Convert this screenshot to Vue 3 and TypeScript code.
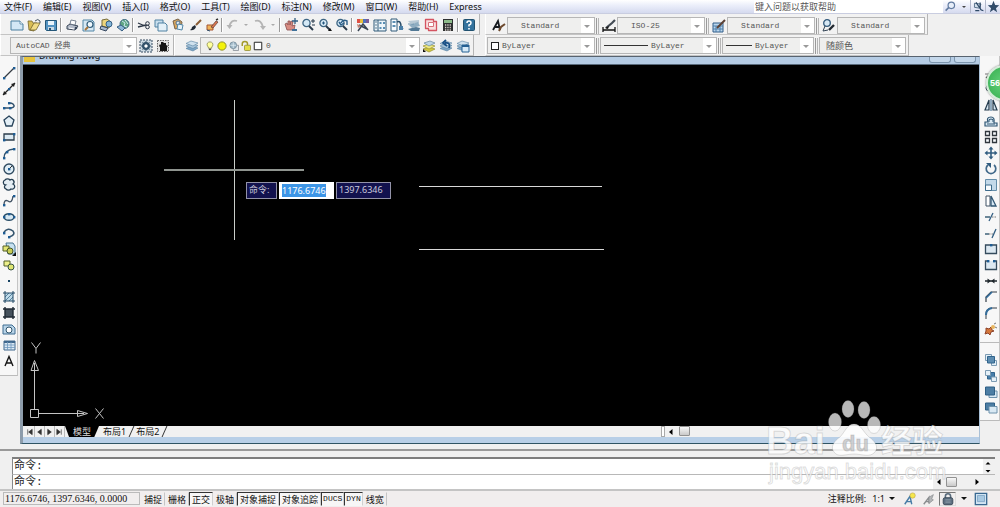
<script setup lang="ts">
import { ref } from 'vue'

interface Combo {
  label: string
  value: string
  width: number
  icon?: string
  lead?: 'swatch' | 'line' | 'short'
  pad?: number
}

const menus: string[] = ['文件(F)', '编辑(E)', '视图(V)', '插入(I)', '格式(O)', '工具(T)', '绘图(D)', '标注(N)', '修改(M)', '窗口(W)', '帮助(H)', 'Express']

const layersShape = '<path d="M2 10.500l5-2.500 7 2-5 3z" fill="#7aa3c4" stroke="#55809f" stroke-width=".6"/><path d="M2 8l5-2.500 7 2-5 3z" fill="#a9c7de" stroke="#55809f" stroke-width=".6"/><path d="M2 5.500l5-2.500 7 2-5 3z" fill="#cfe1ee" stroke="#55809f" stroke-width=".6"/>'
const lens = '<circle cx="6.500" cy="6" r="3.600" fill="#d5e9f6" stroke="#3d6583" stroke-width="1.300"/><path d="M9 9l4 4" stroke="#2a3b4b" stroke-width="2"/>'
const dots = (points: number[][]): string => points.map(([x, y]) => `<rect x="${x - 1}" y="${y - 1}" width="2.400" height="2.400" fill="#1e5c93"/>`).join('')

const icons: Record<string, string> = {
  new: '<path d="M2 4h9l3 3v6H2z" fill="#d3e7f5" stroke="#4b7f9f"/><path d="M11 4v3h3" fill="#fff" stroke="#4b7f9f" stroke-width=".8"/>',
  open: '<path d="M2 4h4l1 2h4l-3 8-5-1z" fill="#d9bd55" stroke="#74652d" stroke-width=".8"/><path d="M4 13l4-7h6l-4 7z" fill="#f1dc87" stroke="#74652d" stroke-width=".8"/><path d="M9 4q3-3 5 0v2" fill="none" stroke="#465565"/>',
  save: '<path d="M2.500 3.500h11v10h-10l-1-1z" fill="#5494c3" stroke="#245779"/><path d="M5 4h6v4H5z" fill="#e9f3fa"/><path d="M5 10h6v3H5z" fill="#c9d9e5"/><path d="M6 11h2v2H6z" fill="#285173"/>',
  plot: '<path d="M3 9l3-2 8 2-3 4-8-1z" fill="#b4bcc9" stroke="#394657"/><path d="M6 7l1-4 5 1-1 4z" fill="#fff" stroke="#596779" stroke-width=".8"/><path d="M5 11l5 1" stroke="#fff"/><circle cx="12" cy="11" r="1.300" fill="#39475b"/>',
  preview: '<path d="M2 3h9l2 2v9H2z" fill="#d7e8f3" stroke="#5387a7"/><circle cx="9" cy="7.500" r="3" fill="#eff8fd" stroke="#315d7a" stroke-width="1.200"/><path d="M7 10l-3 3" stroke="#a8753c" stroke-width="2"/>',
  publish: '<path d="M4 3l5-1 4 3-2 6-7-2z" fill="#edd57b" stroke="#776c3b"/><circle cx="11" cy="7" r="3" fill="#83b5d8" stroke="#345f83"/><path d="M3 9l7 2-2 3-6-2z" fill="#a8b9ce" stroke="#34465c"/>',
  web: '<circle cx="9.500" cy="7" r="4.500" fill="#62a785" stroke="#3b6580"/><path d="M7 4l3 2-1 3 3 1M10 3l3 4" stroke="#c8e8ee" fill="none"/><path d="M2 10l4-2 4 3-3 3z" fill="#8fb8da" stroke="#385f83"/>',
  cut: '<path d="M2 6l7 3M2 10l8-2" stroke="#2a3544" stroke-width="1.300"/><circle cx="11.500" cy="6.500" r="1.800" fill="none" stroke="#2a3544"/><circle cx="11.500" cy="10" r="1.800" fill="none" stroke="#2a3544"/>',
  copy: '<path d="M2 3h8v7H2z" fill="#c8deed" stroke="#4f81a2"/><path d="M5 6h7l2 2v6H5z" fill="#e3f0f8" stroke="#4f81a2"/>',
  paste: '<path d="M3 4l5-2 4 3-1 6-6 1z" fill="#d8a65d" stroke="#77634a"/><circle cx="8" cy="6" r="2" fill="#dce7ee" stroke="#50708c"/><path d="M8 7l5 1-1 5-5-1z" fill="#e6f3fb" stroke="#5387a7"/>',
  brush: '<path d="M9 8l5-5" stroke="#8a5d35" stroke-width="2"/><path d="M3 13q2-1 2-3l3-2 1 2q-2 4-6 3z" fill="#202934"/>',
  block: '<path d="M3 8h6v5H3z" fill="#efb45b" stroke="#a55430"/><path d="M7 10l5-6 2 1-5 6z" fill="#dc7650" stroke="#5a3b30" stroke-width=".7"/><path d="M12 3l2-1" stroke="#333" stroke-width="1.500"/><path d="M3 13l3 1" stroke="#31526f"/>',
  undo: '<path d="M12 4q-6-2-8 6" fill="none" stroke="#b4b4b4" stroke-width="1.800"/><path d="M1.500 8l3 4 3-4z" fill="#b4b4b4"/>',
  redo: '<path d="M3 4q6-2 8 6" fill="none" stroke="#b4b4b4" stroke-width="1.800"/><path d="M14 9l-3 4-3-4z" fill="#b4b4b4"/>',
  pan: '<path d="M4 13l-2-6 2-1 1 2V4h2v4l1-4 2 1-1 4 3-1-1 5z" fill="#d88c82" stroke="#8b5151" stroke-width=".8"/><path d="M12 1v6M9 4h6" stroke="#315f83" stroke-width="1.300"/><path d="M9 12h5v2H9z" fill="#40729a"/>',
  zoom: lens + '<path d="M13 2v4M11 4h4M12 8h3" stroke="#26394a"/>',
  zoomwin: lens + '<path d="M5 6h3M6.500 4.500v3" stroke="#24577e"/><path d="M11 14h4l-2-3z" fill="#111"/>',
  zoomprev: lens + '<path d="M13 8V4q-4-2-6 2M5 5l2 3 3-2" fill="none" stroke="#2c5e88" stroke-width="1.400"/>',
  props: '<path d="M2 2h3v4H2z" fill="#df5144"/><path d="M5 2h3v4H5z" fill="#e8bf3d"/><path d="M8 2h3v4H8z" fill="#4f72bd"/><path d="M11 2h3v4h-3z" fill="#7b5b98"/><path d="M3 14l5-7 5 6M4 8l8 4" stroke="#384453" stroke-width="1.500" fill="none"/><path d="M2 7l4 2-3 2z" fill="#c18274"/>',
  design: '<path d="M2 3h12v11H2z" fill="#edf5f9" stroke="#315b78"/><path d="M6 3v11" stroke="#315b78"/><path d="M3.500 5h1M3.500 8h1M3.500 11h1" stroke="#315b78" stroke-width="1.500"/><path d="M7.500 5h2v2h-2zM11 5h2v2h-2zM7.500 10h2v2h-2zM11 10h2v2h-2z" fill="#598eb3"/>',
  palette: '<path d="M2 2h6v12H2z" fill="#f8fcff" stroke="#315b78"/><path d="M3.500 4h3v2h-3zM3.500 8h3v2h-3z" fill="#5b8eb3"/><path d="M8 5q4-2 4 5l2 2" fill="none" stroke="#284c68" stroke-width="1.500"/><path d="M10 9h4v4h-4z" fill="#4a7fa8"/>',
  sheet: '<path d="M2 4l11-1v3H4z" fill="#b8c9d5"/><path d="M3 8l9-3 2 4-8 2z" fill="#8fadc1"/><path d="M2 12l8-2 4 1-1 3H5z" fill="#537995"/><path d="M2 7h6" stroke="#6e94af"/>',
  markup: '<path d="M2.500 2.500h8v2h3v9h-8v-2h-3z" fill="#f8dfdf" stroke="#d45461" stroke-width="1.300" stroke-linejoin="round"/><path d="M5.500 5.500h5v4h-5z" fill="#fff" stroke="#d8707a"/>',
  calc: '<rect x="3" y="2" width="10" height="12" fill="#2e3030"/><path d="M4 3h8v3H4z" fill="#8ebc8b"/><path d="M5 8h6M5 10.500h6M5 13h6" stroke="#ded3cf" stroke-width="1.300" stroke-dasharray="1.300 1"/>',
  help: '<rect x="2.500" y="2.500" width="11" height="11" rx="1" fill="#33729d" stroke="#20516f"/><path d="M6 6q0-2 2-2t2 2q0 1.500-2 2v1.500" fill="none" stroke="#fff" stroke-width="1.500"/><path d="M7.200 11h1.600v1.500H7.200z" fill="#fff"/>',
  textstyle: '<path d="M2 12L7 3l2 9M4 9h4" fill="none" stroke="#171b20" stroke-width="1.800"/><path d="M8 13l2-4 4-3" fill="none" stroke="#6d4a2e" stroke-width="2"/>',
  dimstyle: '<path d="M2 9v5M14 9v5M2 12h12" stroke="#111" stroke-width="1.300"/><path d="M5 10l6-5 3-3" stroke="#434b54" stroke-width="2.200"/><path d="M4 10l4-2-1 3z" fill="#111"/>',
  tablestyle: '<path d="M2 5h10v9H2z" fill="#bad6ed" stroke="#315d88"/><path d="M2 8h10M5 8v6M9 8v6M2 11h10" stroke="#4c7fab"/><path d="M6 10l8-8" stroke="#5b4135" stroke-width="2"/>',
  leader: '<circle cx="6" cy="5" r="3.300" fill="#d7e8f4" stroke="#335a7b" stroke-width="1.300"/><path d="M4 8l-2 5 5-1" fill="none" stroke="#334455"/><path d="M8 12l5-5" stroke="#212830" stroke-width="2.400"/>',
  gear: '<path d="M2 2h12v12H2z" fill="#d0dce4" stroke="#344b60" stroke-dasharray="2 1"/><circle cx="8" cy="8" r="3" fill="none" stroke="#34536b" stroke-width="2"/><path d="M8 3v10M3 8h10M4.500 4.500l7 7M11.500 4.500l-7 7" stroke="#34536b"/><circle cx="8" cy="8" r="1.500" fill="#fff"/>',
  home: '<path d="M2.500 2.500h11v11h-11z" fill="#e3e3e3" stroke="#666" stroke-dasharray="1.500 1"/><path d="M4 8l1-2 1 1V4h2l1 1h2v2l2 1-1 1v4H5V9z" fill="#161616"/>',
  layers: layersShape,
  layercur: '<path d="M2 11l6-2 6 2-6 3z" fill="#d3c940" stroke="#96902e" stroke-width=".7"/><path d="M2 8l6-2 6 2-6 3z" fill="#efe982" stroke="#96902e" stroke-width=".7"/><path d="M3 5l6-2 5 2-6 3z" fill="#bfd6e7" stroke="#64859c" stroke-width=".7"/><path d="M2 14h3l-3-3z" fill="#111"/>',
  layerprev: layersShape + '<path d="M11 10q2-6-4-5M8 2L5 5l4 3" fill="none" stroke="#174f85" stroke-width="1.800"/>',
  layerstate: layersShape + '<path d="M7 7h7v7H7z" fill="#d7ebf9" stroke="#246093"/><path d="M7 8h7" stroke="#246093" stroke-width="2"/>',
  line: '<path d="M3 13L13 3" stroke="#343b43" stroke-width="1.300"/>' + dots([[3, 13], [13, 3]]),
  xline: '<path d="M2 14L14 2" stroke="#222" stroke-width="1.300"/><path d="M2 14l1-4 3 3zM14 2l-1 4-3-3z" fill="#222"/>' + dots([[8, 8]]),
  pline: '<path d="M3 11h7q5-1 2-4-1-1-4-1" fill="none" stroke="#31516c" stroke-width="1.500"/>' + dots([[3, 11], [9, 11], [8, 6]]),
  polygon: '<path d="M8 3l5 4-2 6H5L3 7z" fill="#e3eef5" stroke="#28435a" stroke-width="1.300"/>',
  rect: '<path d="M3 5h10v6H3z" fill="#dceaf3" stroke="#2b3c4b" stroke-width="1.300"/>' + dots([[3, 11], [13, 5]]),
  arc: '<path d="M3 13q0-8 10-9" fill="none" stroke="#31536f" stroke-width="1.400"/>' + dots([[3, 13], [6, 7], [13, 4]]),
  circle: '<circle cx="8" cy="8" r="5" fill="#e1eef6" stroke="#304b61" stroke-width="1.400"/><path d="M8 8l3-3" stroke="#333"/>' + dots([[8, 8]]),
  cloud: '<path d="M4 3a3 2.500 0 0 1 5 0 2.500 2.500 0 0 1 3 4 2.600 2.600 0 1 1-2 5 3 2.500 0 0 1-5 0 2.200 2.200 0 0 1-.5-4A2.600 2.600 0 0 1 4 3z" fill="#e5eef4" stroke="#263f53" stroke-width="1.300"/>',
  spline: '<path d="M3 12q0-6 4-4 4 3 5-5" fill="none" stroke="#405163" stroke-width="1.300"/>' + dots([[3, 12], [13, 3]]),
  ellipse: '<ellipse cx="8" cy="8" rx="5" ry="3.300" fill="#d6e7f1" stroke="#284d67" stroke-width="1.500"/>' + dots([[3, 8], [8, 5], [13, 8]]),
  earc: '<path d="M3 7q4-5 9-1 3 4-4 6" fill="none" stroke="#35556e" stroke-width="1.600"/>' + dots([[3, 8], [8, 12]]),
  insert: '<path d="M5 2h7l2 3v8H7z" fill="#c6e0ef" stroke="#477491"/><path d="M2 5h6v5H2z" fill="#e2e575" stroke="#54602b"/><circle cx="9" cy="10" r="3" fill="#c7cd54" stroke="#465426"/><path d="M11 15h4v-4z" fill="#111"/>',
  make: '<path d="M3 4h6v5H3z" fill="#edf08c" stroke="#54602b"/><circle cx="10" cy="10" r="3" fill="#dfe571" stroke="#355143"/>',
  point: '<rect x="7" y="7" width="2" height="2" fill="#174262"/>',
  hatch: '<path d="M4 4h8v8H4z" fill="#bfdbea"/><path d="M4 12l8-8M4 8l4-4M8 12l4-4" stroke="#57839e"/><path d="M4 2v12M12 2v12M2 4h12M2 12h12" stroke="#244b67"/>',
  gradient: '<path d="M4 4h8v8H4z" fill="#45515c"/><path d="M4 2v12M12 2v12M2 4h12M2 12h12" stroke="#202a34" stroke-width="1.400"/>',
  region: '<path d="M2 4h9l3 3v6H2z" fill="#b9d4e8" stroke="#3f6c90"/><circle cx="8" cy="9" r="3" fill="#fff" stroke="#31566e"/>',
  table: '<path d="M3 4h11v9H3z" fill="#dbe9f4" stroke="#40688d"/><path d="M3 5h11" stroke="#40688d" stroke-width="2"/><path d="M3 8h11M3 10.500h11M6.500 5v8M10 5v8" stroke="#6f98be" stroke-width=".8"/>',
  mtext: '<path d="M4 13L8 3.500 12 13M5.500 10h5" fill="none" stroke="#151515" stroke-width="1.400"/>',
  erase: '<path d="M3 13L13 3" stroke="#444" stroke-width="1.300"/><path d="M2 9h4" stroke="#777"/>',
  copyobj: '<circle cx="6" cy="7" r="3" fill="none" stroke="#345"/><circle cx="10" cy="10" r="3" fill="none" stroke="#345"/>',
  mirror: '<path d="M6 3v10H2zM10 3v10h4z" fill="#d7e6f1" stroke="#253b4d" stroke-width="1.200"/><path d="M8 2v12" stroke="#2c5f86"/>',
  offset: '<path d="M2 13h12v-3h-3q1-6-3-6-5 0-3 5H2z" fill="#d8e8f2" stroke="#315774" stroke-width="1.200"/><path d="M4 11h8M6 9q-1-3 2-3t2 3" fill="none" stroke="#315774"/>',
  array: '<path d="M2.500 2.500h4v4h-4zM9.500 2.500h4v4h-4zM2.500 9.500h4v4h-4zM9.500 9.500h4v4h-4z" fill="#f8fbfd" stroke="#30373d" stroke-width="1.300"/>',
  move: '<path d="M8 3v10M3 8h10" stroke="#315c7f" stroke-width="1.600"/><path d="M8 1.500l2.500 3h-5zM8 14.500l2.500-3h-5zM1.500 8l3-2.500v5zM14.500 8l-3-2.500v5z" fill="#315c7f"/>',
  rotate: '<path d="M11 4a4.800 4.800 0 1 1-6 0" fill="none" stroke="#41698a" stroke-width="1.700"/><path d="M3 2h5v5z" fill="#315c7f"/>',
  scale: '<path d="M2.500 2.500h11v11h-11z" fill="#c3d9e9" stroke="#648da9"/><path d="M2.500 8h6v5.500h-6z" fill="#f8fcfe" stroke="#3d6b8b"/>',
  stretch: '<path d="M3 3h4v10H3z" fill="#fff" stroke="#405364"/><path d="M8 3l5 10H8z" fill="#d6e7f3" stroke="#315774" stroke-width="1.300"/>',
  trim: '<path d="M2 8h5" stroke="#30566f" stroke-width="1.400"/><path d="M6 12l4-8" stroke="#315d81" stroke-width="1.300"/><path d="M9 8h5" stroke="#777" stroke-dasharray="1.500 1"/>',
  extend: '<path d="M2 9h4" stroke="#30566f" stroke-width="1.400"/><path d="M6 9h5" stroke="#777" stroke-dasharray="1.500 1"/><path d="M9 13l4-9" stroke="#315d81" stroke-width="1.300"/>',
  breakpt: '<path d="M2.500 4h11v8.500h-11z" fill="#dce8f1" stroke="#354b5d" stroke-width="1.300"/>' + dots([[8, 4]]),
  break: '<path d="M2.500 4h11v8.500h-11z" fill="#dce8f1"/><path d="M5 4H2.500v8.500h11V4H11" fill="none" stroke="#354b5d" stroke-width="1.300"/>' + dots([[5, 4], [11, 4]]),
  join: '<path d="M2 8h12" stroke="#20282e" stroke-width="1.500"/><path d="M8 8L4.500 5.500v5zM8 8l3.500-2.500v5z" fill="#20282e"/>',
  chamfer: '<path d="M3 13V8l5-5h6" fill="none" stroke="#333d46" stroke-width="1.200"/><path d="M3 9l6-6" stroke="#346d9b" stroke-width="1.700"/>',
  fillet: '<path d="M3 14V9q0-6 6-6h5" fill="none" stroke="#333d46"/><path d="M3 10q0-6 6-7" fill="none" stroke="#346d9b" stroke-width="2"/>',
  explode: '<path d="M3 7l3 1 2-2 1 3 2 1-3 1-1 3-2-2-3 1 1-3z" fill="#d5773b" stroke="#8e442b"/><circle cx="10" cy="6" r="2" fill="#e9b65f"/><path d="M11 3l2-1M12 6l2 1" stroke="#777"/>',
  front: '<path d="M2.500 2.500h6v6h-6zM8.500 8.500h5v5h-5z" fill="#e5f0f8" stroke="#7c9bb2"/><path d="M4.500 4.500h7v6.500h-7z" fill="#5d8cb0" stroke="#31648c"/>',
  back: '<path d="M4.500 4.500h7v6.500h-7z" fill="#477eaa" stroke="#31648c"/><path d="M2.500 2.500h5v5h-5zM8.500 9h5v4.500h-5z" fill="#e5f0f8" stroke="#7c9bb2"/>',
  above: '<path d="M6 7h8v6.500H6z" fill="#d9e9f4" stroke="#6e92ac"/><path d="M2.500 3h9v8h-9z" fill="#4d7ea4" stroke="#2f5f85"/>',
  below: '<path d="M2.500 3h9v7h-9z" fill="#4d7ea4" stroke="#2f5f85"/><path d="M6 6.500h8v6.500H6z" fill="#d9e9f4" stroke="#6e92ac"/>',
  bulb: '<path d="M6 11q0-2-1.500-3-1.500-5 3.500-5.500Q13 3 11.500 8 10 9 10 11z" fill="#ffff9b" stroke="#858545"/><path d="M6.500 12.500h3" stroke="#555" stroke-width="2"/>',
  sun: '<circle cx="8" cy="8" r="5.500" fill="#f3f20b" stroke="#8f8d28" stroke-width="1.300"/>',
  freeze: '<path d="M7 7h7v7H7z" fill="#e2e8ec" stroke="#808890"/><circle cx="7" cy="7" r="4.500" fill="#9eb7c7" stroke="#6e8493"/><path d="M7 3v8M3 7h8" stroke="#e1edf4"/>',
  lock: '<path d="M3 8V5q0-3 3.500-3T10 5v2" fill="none" stroke="#a39a2c" stroke-width="2"/><rect x="6" y="7" width="8" height="7" rx="1" fill="#e5df46" stroke="#8e872c"/>',
  box: '<path d="M3 3h10v10H3z" fill="#fff" stroke="#222" stroke-width="1.300"/>',
  search: '<circle cx="9" cy="6.500" r="4" fill="#e7eef9" stroke="#627ba0" stroke-width="1.500"/><path d="M6 9l-4 4" stroke="#627ba0" stroke-width="2"/>',
  comm: '<path d="M3 4l8 1-2 5-6-1z" fill="#d2dfec" stroke="#3f5b78"/><path d="M5 3l6 9M10 3v6q0 4 4 4M4 13h5" fill="none" stroke="#2e4967" stroke-width="1.500"/>',
  star: '<path d="M8 1l2 5 5 .5-4 3.500 1.500 5-4.500-3-4.500 3L5 10 1 6.500 6 6z" fill="#314c6a"/>',
  annot: '<path d="M2 14L8 5l2 9M4 11h5" fill="none" stroke="#477ca6" stroke-width="1.600"/><circle cx="11" cy="4" r="3" fill="#f6e74b" stroke="#bda646" stroke-width=".7"/>',
  annotauto: '<path d="M2 14L8 6v7M4 11h5" fill="none" stroke="#8a8d8f" stroke-width="1.600"/><path d="M8 6l5-3-2 5 2 1-5 4z" fill="#b4b6b8" stroke="#8a8d8f" stroke-width=".8"/>',
  padlock: '<path d="M5 8V5q0-3 3-3t3 3v3" fill="none" stroke="#596b7c" stroke-width="1.800"/><rect x="2.500" y="6.500" width="11" height="8" rx="2" fill="#5d6f80" stroke="#364655"/><path d="M5 9h6M5 11.500h6" stroke="#b5c0c9" stroke-width=".7"/>',
  clean: '<path d="M1.500 1.500h13v13h-13z" fill="#d2e4f2" stroke="#396891" stroke-width="1.500"/><path d="M4 4h8v7H4z" fill="#a8c9e2" stroke="#6994b8" stroke-width=".7"/>',
}

const standardBar: string[] = ['new', 'open', 'save', '|', 'plot', 'preview', 'publish', 'web', '|', 'cut', 'copy', 'paste', 'brush', 'block', '|', 'undo', 'v', 'redo', 'v', '|', 'pan', 'zoom', 'zoomwin', 'zoomprev', '|', 'props', 'design', 'palette', 'sheet', 'markup', 'calc', '|', 'help']
const styleCombos: Combo[] = [
  { label: '文字样式', value: 'Standard', width: 88, icon: 'textstyle', pad: 13 },
  { label: '标注样式', value: 'ISO-25', width: 88, icon: 'dimstyle', pad: 13 },
  { label: '表格样式', value: 'Standard', width: 88, icon: 'tablestyle', pad: 13 },
  { label: '多重引线样式', value: 'Standard', width: 88, icon: 'leader', pad: 13 },
]
const propertyCombos: Combo[] = [
  { label: '颜色', value: 'ByLayer', width: 108, lead: 'swatch' },
  { label: '线型', value: 'ByLayer', width: 117, lead: 'line' },
  { label: '线宽', value: 'ByLayer', width: 92, lead: 'short' },
  { label: '打印样式', value: '随颜色', width: 87, pad: 6 },
]
const layerFlags: string[] = ['bulb', 'sun', 'freeze', 'lock', 'box']
const layerTools: string[] = ['layercur', 'layerprev', 'layerstate']
const drawTools: string[] = ['line', 'xline', 'pline', 'polygon', 'rect', 'arc', 'circle', 'cloud', 'spline', 'ellipse', 'earc', 'insert', 'make', 'point', 'hatch', 'gradient', 'region', 'table', 'mtext']
const modifyTools: string[] = ['erase', 'copyobj', 'mirror', 'offset', 'array', 'move', 'rotate', 'scale', 'stretch', 'trim', 'extend', 'breakpt', 'break', 'join', 'chamfer', 'fillet', 'explode']
const orderTools: string[] = ['front', 'back', 'above', 'below']
const tabNav: string[] = ['M3 2v6M8 2L4 5l4 3z', 'M7 2L3 5l4 3z', 'M3 2l4 3-4 3z', 'M7 2v6M2 2l4 3-4 3z']

const modes = ref([
  { name: '捕捉', on: false },
  { name: '栅格', on: false },
  { name: '正交', on: true },
  { name: '极轴', on: false },
  { name: '对象捕捉', on: true },
  { name: '对象追踪', on: true },
  { name: 'DUCS', on: true },
  { name: 'DYN', on: true },
  { name: '线宽', on: false },
])
const question = ref('')
const command = ref('')
const coordX = ref('1176.6746')
</script>

<template>
  <div class="app">
    <header class="menubar">
      <nav class="menus">
        <button v-for="m in menus" :key="m" type="button">{{ m }}</button>
      </nav>
      <div class="infocenter">
        <input v-model="question" type="text" aria-label="帮助搜索" placeholder="键入问题以获取帮助" />
        <button class="tool" type="button" aria-label="search"><svg viewBox="0 0 16 16" v-html="icons.search" /></button>
        <span class="caret dark"></span>
        <button class="tool framed" type="button" aria-label="comm"><svg viewBox="0 0 16 16" v-html="icons.comm" /></button>
        <button class="tool framed" type="button" aria-label="star"><svg viewBox="0 0 16 16" v-html="icons.star" /></button>
      </div>
    </header>

    <div class="bars">
      <div class="bar standard">
        <template v-for="(t, i) in standardBar" :key="i">
          <span v-if="t === '|'" class="sep"></span>
          <span v-else-if="t === 'v'" class="drop"><span class="caret"></span></span>
          <button v-else class="tool" type="button" :aria-label="t"><svg viewBox="0 0 16 16" v-html="icons[t]" /></button>
        </template>
      </div>
      <div class="bar styles">
        <template v-for="(c, i) in styleCombos" :key="c.label">
          <span v-if="i" class="sep wide"></span>
          <span class="tool"><svg viewBox="0 0 16 16" v-html="icons[c.icon ?? '']" /></span>
          <label class="combo" :style="{ width: c.width + 'px' }">
            <select :aria-label="c.label" :style="{ paddingLeft: c.pad + 'px' }"><option>{{ c.value }}</option></select>
          </label>
        </template>
      </div>
    </div>

    <div class="bars">
      <div class="bar workspace">
        <label class="combo space"><select aria-label="工作空间"><option>AutoCAD 经典</option></select></label>
        <button class="tool" type="button" aria-label="gear"><svg viewBox="0 0 16 16" v-html="icons.gear" /></button>
        <button class="tool" type="button" aria-label="home"><svg viewBox="0 0 16 16" v-html="icons.home" /></button>
      </div>
      <div class="bar layer">
        <button class="tool" type="button" aria-label="layers"><svg viewBox="0 0 16 16" v-html="icons.layers" /></button>
        <label class="combo layers">
          <svg v-for="f in layerFlags" :key="f" class="flag" viewBox="0 0 16 16" v-html="icons[f]" />
          <select aria-label="图层"><option>0</option></select>
        </label>
        <button v-for="t in layerTools" :key="t" class="tool" type="button" :aria-label="t"><svg viewBox="0 0 16 16" v-html="icons[t]" /></button>
      </div>
      <div class="bar properties">
        <template v-for="(c, i) in propertyCombos" :key="c.label">
          <span v-if="i" class="sep wide"></span>
          <label class="combo" :style="{ width: c.width + 'px' }">
            <span v-if="c.lead" class="lead" :class="c.lead"></span>
            <select :aria-label="c.label" :style="{ paddingLeft: (c.pad ?? 3) + 'px' }"><option>{{ c.value }}</option></select>
          </label>
        </template>
      </div>
    </div>

    <main class="work">
      <aside class="side left">
        <div class="dock">
          <button v-for="t in drawTools" :key="t" class="tool" type="button" :aria-label="t"><svg viewBox="0 0 16 16" v-html="icons[t]" /></button>
        </div>
      </aside>

      <section class="document">
        <div class="title">
          <span class="doc-icon"></span><span class="name">Drawing1.dwg</span>
          <button type="button" class="win" aria-label="最小化"></button>
          <button type="button" class="win" aria-label="还原"></button>
        </div>
        <div class="canvas">
          <svg class="drawing">
            <g fill="none" stroke="#c9cdc9" shape-rendering="crispEdges">
              <path d="M211.500 35v140" />
              <path d="M141 105h140" stroke="#8f948f" stroke-width="2" />
              <path d="M396 121.500h183M396 184.500h185" stroke="#d8d8d8" />
            </g>
            <g fill="none" stroke="#c4c4c4">
              <path d="M7.500 344.500h8v8h-8zM11.500 344v-38M16 348.500h38" />
              <path d="M8 305.500l3.500-10 4 10zM54.500 345.500l10 3-10 3z" />
              <path d="M11.500 298v7M55 348.500h6" />
              <path d="M8.500 277.500l4.500 6 4.500-6M13 283.500v5M72.500 343.500l8 10M80.500 343.500l-8 10" />
            </g>
          </svg>
          <div class="dynamic">
            <label for="dyn-x">命令:</label>
            <input id="dyn-x" v-model="coordX" type="text" />
            <output>1397.6346</output>
          </div>
        </div>
        <div class="tabs">
          <div class="tab-nav">
            <button v-for="(d, i) in tabNav" :key="i" type="button" :aria-label="'标签导航 ' + (i + 1)">
              <svg viewBox="0 0 10 10"><path :d="d" fill="#333" stroke="#333" stroke-width=".7" /></svg>
            </button>
          </div>
          <button type="button" class="tab model">模型</button>
          <button type="button" class="tab">布局1</button>
          <button type="button" class="tab">布局2</button>
          <div class="hscroll">
            <span class="split"></span>
            <button type="button" class="arrow" aria-label="向左"><svg viewBox="0 0 10 10"><path d="M6.500 2v6L3 5z" /></svg></button>
            <span class="thumb"></span>
          </div>
        </div>
      </section>

      <aside class="side right">
        <div class="dock">
          <button v-for="t in modifyTools" :key="t" class="tool" type="button" :aria-label="t"><svg viewBox="0 0 16 16" v-html="icons[t]" /></button>
        </div>
        <div class="dock order">
          <button v-for="t in orderTools" :key="t" class="tool" type="button" :aria-label="t"><svg viewBox="0 0 16 16" v-html="icons[t]" /></button>
        </div>
        <div class="badge">56</div>
      </aside>
    </main>

    <section class="console">
      <div class="history">
        <span>命令:</span>
        <div class="vscroll">
          <button type="button" aria-label="向上"><svg viewBox="0 0 10 8"><path d="M2.500 5.500h5L5 3z" /></svg></button>
          <button type="button" aria-label="向下"><svg viewBox="0 0 10 8"><path d="M2.500 3h5L5 5.500z" /></svg></button>
        </div>
      </div>
      <div class="prompt">
        <label for="cmd">命令:</label>
        <input id="cmd" v-model="command" type="text" />
        <div class="pscroll">
          <button type="button" class="arrow" aria-label="左移"><svg viewBox="0 0 10 10"><path d="M6.500 2v6L3 5z" /></svg></button>
          <span class="thumb"></span>
          <button type="button" class="arrow" aria-label="右移"><svg viewBox="0 0 10 10"><path d="M3.500 2v6L7 5z" /></svg></button>
        </div>
      </div>
    </section>

    <footer class="status">
      <div class="coords">1176.6746, 1397.6346, 0.0000</div>
      <div class="modes">
        <button v-for="m in modes" :key="m.name" type="button" :class="{ on: m.on }" :aria-pressed="m.on" @click="m.on = !m.on">{{ m.name }}</button>
      </div>
      <div class="tray">
        <span class="ratio">注释比例:</span>
        <button type="button" class="scale">1:1<span class="caret black"></span></button>
        <button class="tool" type="button" aria-label="annot"><svg viewBox="0 0 16 16" v-html="icons.annot" /></button>
        <button class="tool" type="button" aria-label="annotauto"><svg viewBox="0 0 16 16" v-html="icons.annotauto" /></button>
        <button class="tool sunk" type="button" aria-label="padlock"><svg viewBox="0 0 16 16" v-html="icons.padlock" /></button>
        <span class="caret black"></span>
        <button class="tool" type="button" aria-label="clean"><svg viewBox="0 0 16 16" v-html="icons.clean" /></button>
      </div>
    </footer>

    <svg class="watermark" viewBox="0 0 180 88" aria-hidden="true">
      <g fill="#fff" fill-opacity=".72" stroke="#777" stroke-opacity=".22">
        <ellipse cx="67" cy="22" rx="6.500" ry="9" />
        <ellipse cx="80" cy="9" rx="6" ry="8.500" />
        <ellipse cx="96" cy="10" rx="6" ry="8.500" />
        <ellipse cx="106" cy="25" rx="6.500" ry="8.500" />
        <path d="M86 24c7 0 9 8 15 13 6 4 10 10 6 15-5 6-13 2-21 2s-16 4-20-2c-4-5 0-11 6-15 5-5 7-13 14-13z" fill-opacity=".85" />
      </g>
      <text class="wm-name" x="-2" y="54">Bai</text>
      <text class="wm-du" x="74" y="51">du</text>
      <text class="wm-cjk" x="113" y="52">经验</text>
      <text class="wm-url" x="1" y="79">jingyan.baidu.com</text>
    </svg>
  </div>
</template>

<style>
body { margin: 0; background: #f0f0f0; }
</style>

<style scoped>
.app {
  position: relative;
  display: flex;
  flex-direction: column;
  min-height: 100vh;
  overflow: hidden;
  background: #f0f0f0;
  color: #222;
  font: 9px/12px "Noto Sans", "Noto Sans CJK SC", sans-serif;
}
.app * { box-sizing: border-box; }
button, input, select { margin: 0; padding: 0; border: 0; border-radius: 0; background: none; color: inherit; font: inherit; outline: 0; }
svg { display: block; }
.tool { display: flex; flex: none; align-items: center; justify-content: center; width: 17px; height: 16px; }
.tool svg { width: 16px; height: 16px; }

.menubar { display: flex; justify-content: space-between; height: 14px; background: linear-gradient(#fff, #eceffa 40%, #d5daef); border-bottom: 1px solid #c9cde0; }
.menus { display: flex; gap: 11px; padding-left: 4px; color: #111; }
.menus button { line-height: 13px; white-space: nowrap; }
.infocenter { display: flex; align-items: center; width: 246px; }
.infocenter input { flex: 1; min-width: 0; height: 13px; padding-left: 1px; background: #fff; color: #555; }
.infocenter input::placeholder { color: #555; opacity: 1; }
.infocenter .tool { width: 15px; height: 13px; }
.infocenter .tool svg { width: 13px; height: 13px; }
.infocenter .caret { margin: 0 4px; }
.infocenter .framed { border-left: 1px solid #b3b9cc; }

.caret { flex: none; width: 0; height: 0; border: 2px solid transparent; border-top-color: #aaa; border-bottom: 0; }
.caret.dark { border-top-color: #444; }
.caret.black { border-width: 3px 3px 0; border-top-color: #111; }

.bars { display: flex; height: 21px; }
.bar { display: flex; align-items: center; border-right: 1px solid #b5b5b5; border-bottom: 1px solid #c4c4c4; border-left: 1px solid #fff; background: #f2f2f2; }
.standard { padding: 2px 2px 0 7px; }
.styles { margin-left: 5px; padding: 3px 2px 0 4px; }
.workspace { padding: 1px 2px 0 9px; }
.layer { padding: 1px 2px 0 8px; }
.properties { margin-left: 11px; padding: 1px 2px 0 1px; }
.drop { display: flex; justify-content: center; width: 10px; }
.sep { width: 2px; height: 14px; margin: 0 1px; border-left: 1px solid #9a9a9a; border-right: 1px solid #fff; }
.sep.wide { width: 3px; height: 16px; border-right-color: #b5b5b5; }

.combo { position: relative; display: flex; align-items: center; height: 17px; border: 1px solid #b6b6b6; background: linear-gradient(#fff, #fff) right / 13px 100% no-repeat #efefee; }
.combo::after { content: ""; position: absolute; right: 4px; top: 7px; border: 3px solid transparent; border-top-color: #999; border-bottom: 0; pointer-events: none; }
.combo select { flex: 1; min-width: 0; height: 15px; appearance: none; color: #555; font: 8px/15px "Liberation Mono", "Noto Sans CJK SC", monospace; }
.combo.space { width: 127px; }
.combo.space select { padding-left: 5px; }
.combo.layers { width: 220px; padding-left: 3px; }
.combo.layers select { padding-left: 2px; }
.flag { flex: none; width: 12px; height: 12px; }
.lead.swatch { width: 8px; height: 8px; margin-left: 3px; border: 1px solid #222; background: #fff; }
.lead.line, .lead.short { height: 1px; margin-left: 3px; background: #333; }
.lead.line { width: 44px; }
.lead.short { width: 26px; }
.properties .combo:last-child select { padding-top: 1px; font: 9px/14px "Noto Sans CJK SC", sans-serif; }

.work { display: flex; flex: 1; min-height: 388px; }
.side { flex: none; width: 20px; }
.dock { padding-top: 8px; border-right: 1px solid #c5c5c5; border-bottom: 1px solid #bbb; background: #f7f7f7; }
.left .dock { width: 18px; padding-top: 9px; padding-bottom: 6px; }
.right { position: relative; }
.right .dock { padding-top: 9px; padding-left: 2px; padding-bottom: 5px; }
.right .order { padding-top: 9px; padding-bottom: 4px; }
.badge { position: absolute; top: 9px; left: 6px; width: 36px; height: 36px; border: 2px solid #d4ecd8; border-radius: 50%; background: radial-gradient(#65d37b, #35ac4e); color: #fff; font: bold 9px/32px "Liberation Sans", sans-serif; padding-left: 2px; box-shadow: 0 0 2px #777; }

.document { display: flex; flex: 1; flex-direction: column; min-width: 0; border-top: 1px solid #58636f; border-left: 3px solid #8d9cab; border-right: 1px solid #a9c0d6; border-bottom: 1px solid #2f5464; background: #b8cfe7; }
.title { display: flex; align-items: flex-start; height: 8px; overflow: hidden; background: #b5cce4; border-bottom: 1px solid #596a7b; color: #111; }
.doc-icon { width: 11px; height: 5px; margin: 0 4px 0 1px; background: #e7c43e; }
.name { align-self: flex-end; flex: 1; padding-bottom: 2px; font-size: 9px; line-height: 12px; }
.win { width: 22px; height: 6px; margin-right: 3px; border: 1px solid #7d96ae; border-top: 0; border-radius: 0 0 3px 3px; background: #c5d8eb; }
.canvas { position: relative; flex: 1; background: #000; overflow: hidden; }
.drawing { position: absolute; inset: 0; width: 100%; height: 100%; }
.dynamic { position: absolute; left: 223px; top: 117px; display: flex; gap: 2px; color: #c9c9dc; line-height: 14px; }
.dynamic label, .dynamic output { height: 17px; padding: 0 2px; border: 1px solid #9292a8; background: #12124e; }
.dynamic label { width: 31px; }
.dynamic output { width: 55px; }
.dynamic input { width: 55px; height: 17px; padding: 2px 8px 2px 3px; background: linear-gradient(#3d95e6, #3d95e6) content-box, linear-gradient(#fff, #fff) border-box; color: #fff; }

.tabs { display: flex; height: 11px; margin-bottom: 6px; background: #f1f1f1; color: #111; line-height: 11px; }
.tab-nav { display: flex; padding-left: 2px; }
.tab-nav button { width: 10px; border-right: 1px solid #bbb; }
.tab-nav svg { width: 9px; height: 10px; }
.tab { position: relative; padding: 0 6px 0 4px; line-height: 11px; }
.tab::after { content: ""; position: absolute; right: 0; top: 0; height: 11px; border-right: 1px solid #333; transform: skewX(-24deg); }
.tab.model { padding: 0 8px; background: #000; color: #ddd; clip-path: polygon(0 0, 100% 0, 86% 100%, 12% 100%); }
.hscroll { display: flex; width: 318px; margin-left: auto; }
.split { width: 4px; border: 1px solid #aaa; background: #fff; }
.arrow { width: 12px; }
.arrow svg { width: 10px; height: 10px; margin: auto; }
.thumb { width: 11px; height: 10px; margin-left: 2px; border: 1px solid #929292; border-radius: 1px; background: linear-gradient(#f8f8f8, #c9c9c9); }

.console { margin-top: 5px; padding: 6px 5px 0 12px; border-top: 2px solid #999; color: #222; font: 11px/14px "Liberation Mono", "Noto Sans CJK SC", monospace; }
.history { display: flex; justify-content: space-between; height: 18px; border-top: 2px solid #7e7e7e; border-left: 1px solid #888; border-bottom: 1px solid #b8b8b8; background: #fff; }
.history span, .prompt label { padding-left: 1px; }
.vscroll { display: flex; flex-direction: column; width: 12px; background: #f0f0f0; }
.vscroll button { height: 8px; }
.vscroll svg { width: 10px; height: 8px; }
.prompt { display: flex; height: 14px; border-left: 1px solid #888; background: #fff; margin-right: 12px; }
.prompt input { flex: 1; min-width: 0; }
.pscroll { display: flex; align-items: center; gap: 1px; width: 50px; background: #f0f0f0; }
.pscroll .arrow:last-child { margin-left: auto; }
.pscroll .thumb { margin: 0; }

.status { display: flex; align-items: center; height: 18px; padding: 0 2px 1px 3px; border-top: 2px solid #c4c4c4; background: #f1eeee; color: #111; }
.coords { width: 137px; height: 13px; padding-left: 1px; border: 1px solid #bbb; font: 10px/12px "Liberation Serif", serif; white-space: nowrap; }
.modes { display: flex; padding-left: 1px; }
.modes button { height: 14px; padding: 0 2px; border: 1px solid transparent; border-right-color: #c5c5c5; line-height: 13px; }
.modes button.on { border-color: #333 #d0d0d0 transparent #333; background: #f7f6f6; }
.modes button:nth-child(7), .modes button:nth-child(8) { padding: 0 1px; font: 8px/12px "Liberation Mono", monospace; }
.tray { display: flex; align-items: center; margin-left: auto; padding-right: 9px; gap: 2px; }
.ratio { margin-right: 4px; }
.scale { display: flex; align-items: center; gap: 4px; margin-right: 4px; }
.tray .tool { height: 14px; }
.tray .tool svg { width: 14px; height: 14px; }
.tray .sunk { border: 1px solid #777; border-right-color: #ddd; border-bottom-color: #ddd; margin-right: 3px; }
.tray > .caret { margin-right: 3px; }

.watermark { position: absolute; right: 52px; bottom: 19px; width: 180px; height: 88px; overflow: visible; pointer-events: none; }
.watermark text { fill: #fff; fill-opacity: .8; stroke: #777; stroke-opacity: .25; stroke-width: 1px; }
.watermark .wm-name { font: bold 38px "Liberation Sans", sans-serif; }
.watermark .wm-du { font: bold 22px "Liberation Sans", sans-serif; fill: #c4c4c4; }
.watermark .wm-cjk { font: bold 31px "Noto Sans CJK SC", sans-serif; }
.watermark .wm-url { font: 22px "Liberation Sans", sans-serif; }
</style>
